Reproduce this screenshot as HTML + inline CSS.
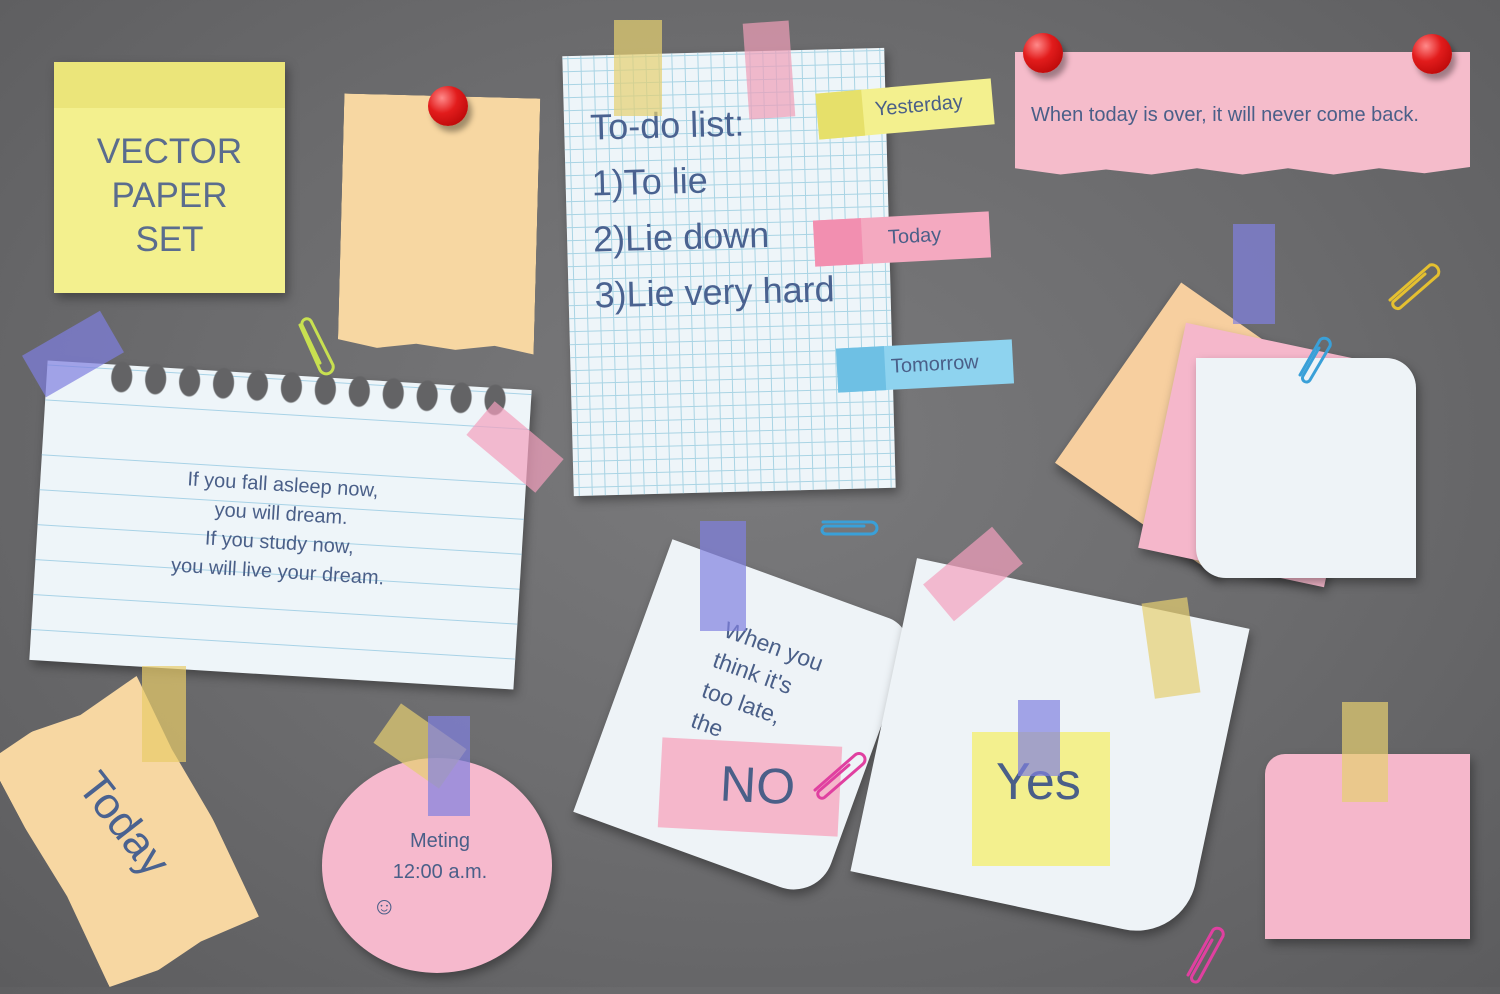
<!DOCTYPE html>
<html><head><meta charset="utf-8"><style>
*{margin:0;padding:0;box-sizing:border-box}
body{width:1500px;height:987px;overflow:hidden;position:relative;background:radial-gradient(ellipse at 50% 45%,#7a7a7c 0%,#6b6b6d 55%,#5c5c5e 100%);font-family:"Comic Sans MS","Liberation Sans",sans-serif;color:#4a5f88}
.a{position:absolute}
.sh{box-shadow:3px 5px 10px rgba(0,0,0,.35)}
.tape{position:absolute;opacity:.7}
.pin{position:absolute;width:40px;height:40px;border-radius:50%;background:radial-gradient(circle at 35% 30%,#ff8a8a 0%,#e21c1c 40%,#a00 100%);box-shadow:4px 6px 6px rgba(0,0,0,.35)}
.t{position:absolute;white-space:nowrap}
</style></head><body>

<div class="a sh" style="left:54px;top:62px;width:231px;height:231px;background:#f3f08e"></div>
<div class="a" style="left:54px;top:62px;width:231px;height:46px;background:#ebe57a"></div>
<div class="t" style="left:54px;top:130px;width:231px;text-align:center;font-size:35px;line-height:44px;color:#5a6c8e">VECTOR<br>PAPER<br>SET</div>

<div class="a sh" style="left:341px;top:96px;width:196px;height:256px;background:#f7d7a2;transform:rotate(1.5deg);clip-path:polygon(0 0,100% 0,100% 100%,80% 97%,60% 99%,40% 97%,20% 99%,0 96%)"></div>
<div class="pin" style="left:428px;top:86px"></div>

<div class="a sh" style="left:568px;top:52px;width:322px;height:440px;transform:rotate(-1.5deg);background-color:#eef5f9;background-image:linear-gradient(#a9d4e4 1px,transparent 1px),linear-gradient(90deg,#a9d4e4 1px,transparent 1px);background-size:13px 13px;background-position:18px 28px">
<div class="t" style="left:26px;top:44px;font-size:36px;line-height:56px;color:#4a6290">To-do list:<br>1)To lie<br>2)Lie down<br>3)Lie very hard</div>
</div>
<div class="tape" style="left:614px;top:20px;width:48px;height:96px;background:#e5d070"></div>
<div class="tape" style="left:746px;top:22px;width:46px;height:96px;background:#ef9eb8;transform:rotate(-4deg)"></div>

<div class="a" style="left:817px;top:86px;width:176px;height:46px;background:#f3f08e;transform:rotate(-5deg)"><div class="a" style="left:0;top:0;width:46px;height:46px;background:#e6e06a"></div><div class="t" style="left:58px;top:10px;font-size:20px">Yesterday</div></div>
<div class="a" style="left:814px;top:216px;width:176px;height:46px;background:#f4a9c0;transform:rotate(-3deg)"><div class="a" style="left:0;top:0;width:48px;height:46px;background:#f28fb0"></div><div class="t" style="left:74px;top:10px;font-size:20px">Today</div></div>
<div class="a" style="left:837px;top:344px;width:176px;height:44px;background:#8ed3ef;transform:rotate(-3deg)"><div class="a" style="left:0;top:0;width:48px;height:44px;background:#6ec0e4"></div><div class="t" style="left:54px;top:10px;font-size:20px">Tomorrow</div></div>

<div class="a sh" style="left:1015px;top:52px;width:455px;height:125px;background:#f5bccb;clip-path:polygon(0 0,100% 0,100% 92%,90% 97%,80% 93%,70% 98%,60% 93%,50% 98%,40% 93%,30% 98%,20% 94%,10% 98%,0 93%)"></div>
<div class="t" style="left:1031px;top:104px;font-size:20px">When today is over, it will never come back.</div>
<div class="pin" style="left:1023px;top:33px"></div>
<div class="pin" style="left:1412px;top:34px"></div>

<div class="a sh" style="left:38px;top:375px;width:485px;height:300px;transform:rotate(3.5deg);background-color:#eef5f9;background-image:repeating-linear-gradient(transparent 0 34px,#a8d2e6 34px 35px);background-position:0 60px">
<div class="t" style="left:0;top:96px;width:485px;text-align:center;font-size:20px;line-height:29px;color:#4a5f88">If you fall asleep now,<br>you will dream.<br>If you study now,<br>you will live your dream.</div>
<div class="a" style="left:58px;top:-6px;width:410px;height:40px;background:radial-gradient(ellipse 11px 16px at 50% 45%,#636365 10px,transparent 11px);background-size:34px 40px"></div>
</div>
<div class="tape" style="left:28px;top:330px;width:90px;height:48px;background:#7f7fe0;transform:rotate(-30deg)"></div>
<div class="tape" style="left:470px;top:425px;width:90px;height:44px;background:#f4a0be;transform:rotate(40deg)"></div>

<div class="a sh" style="left:1100px;top:320px;width:200px;height:220px;background:#f7cf9f;transform:rotate(35deg)"></div>
<div class="a sh" style="left:1160px;top:340px;width:190px;height:230px;background:#f5b7cb;transform:rotate(12deg)"></div>
<div class="a sh" style="left:1196px;top:358px;width:220px;height:220px;background:#eef3f7;border-radius:0 30px 0 30px"></div>
<div class="tape" style="left:1233px;top:224px;width:42px;height:100px;background:#8080e0"></div>

<div class="a sh" style="left:40px;top:700px;width:170px;height:270px;background:#f7d7a2;transform:rotate(-28deg);clip-path:polygon(0 2%,30% 0,60% 3%,100% 0,98% 30%,100% 60%,97% 100%,60% 98%,30% 100%,0 97%,3% 60%,0 30%)"><div class="t" style="left:30px;top:100px;font-size:44px;transform:rotate(80deg);color:#4a6290">Today</div></div>
<div class="tape" style="left:142px;top:666px;width:44px;height:96px;background:#e8cc6a"></div>

<div class="a sh" style="left:322px;top:758px;width:230px;height:215px;border-radius:50%;background:#f6b9cd"></div>
<div class="t" style="left:380px;top:826px;width:120px;text-align:center;font-size:20px;line-height:31px">Meting<br>12:00 a.m.</div>
<div class="t" style="left:372px;top:893px;font-size:24px">☺</div>
<div class="tape" style="left:380px;top:722px;width:80px;height:48px;background:#e5cf70;transform:rotate(35deg)"></div>
<div class="tape" style="left:428px;top:716px;width:42px;height:100px;background:#8080e0"></div>

<div class="a sh" style="left:615px;top:575px;width:260px;height:290px;background:#eef3f7;transform:rotate(20deg);border-radius:0 30px 40px 0"><div class="t" style="left:80px;top:50px;font-size:23px;line-height:32px">When you<br>think it's<br>too late,<br>the<br>it's</div></div>
<div class="tape" style="left:700px;top:521px;width:46px;height:110px;background:#8080e0"></div>
<div class="a" style="left:660px;top:742px;width:180px;height:90px;background:#f5b7cb;transform:rotate(3deg)"><div class="t" style="left:60px;top:14px;font-size:50px">NO</div></div>

<div class="a sh" style="left:880px;top:590px;width:340px;height:320px;background:#eef3f7;transform:rotate(12deg);border-radius:0 0 60px 0"></div>
<div class="tape" style="left:928px;top:550px;width:90px;height:48px;background:#f4a0be;transform:rotate(-40deg)"></div>
<div class="tape" style="left:1148px;top:600px;width:46px;height:96px;background:#e5cf70;transform:rotate(-8deg)"></div>
<div class="a" style="left:972px;top:732px;width:138px;height:134px;background:#f3f08e"><div class="t" style="left:24px;top:20px;font-size:52px">Yes</div></div>
<div class="tape" style="left:1018px;top:700px;width:42px;height:76px;background:#8080e0"></div>

<div class="a sh" style="left:1265px;top:754px;width:205px;height:185px;background:#f5b7cb;border-radius:20px 0 0 0"></div>
<div class="tape" style="left:1342px;top:702px;width:46px;height:100px;background:#e5cf70"></div>

<svg class="a" style="left:0;top:0" width="1500" height="987" fill="none" stroke-width="3" stroke-linecap="round">
<path d="M300 325 l20 45 a7 7 0 0 0 13 -5 l-22 -44 a5 5 0 0 0 -9 4 l18 38" stroke="#c8e050"/>
<path d="M1390 300 l40 -35 a7 7 0 0 1 8 10 l-38 33 a5 5 0 0 1 -7 -6 l32 -28" stroke="#e5c030"/>
<path d="M1300 375 l20 -35 a6 6 0 0 1 10 6 l-20 34 a4 4 0 0 1 -7 -4 l16 -28" stroke="#3aa0d8"/>
<path d="M823 522 h48 a6 6 0 0 1 0 12 h-45 a4 4 0 0 1 0 -8 h38" stroke="#3aa0d8"/>
<path d="M815 790 l40 -35 a6 6 0 0 1 8 9 l-38 33 a4 4 0 0 1 -6 -6 l30 -26" stroke="#e040a0"/>
<path d="M1188 975 l25 -45 a6 6 0 0 1 10 6 l-24 44 a4 4 0 0 1 -7 -4 l20 -36" stroke="#e040a0"/>
</svg>
</body></html>
